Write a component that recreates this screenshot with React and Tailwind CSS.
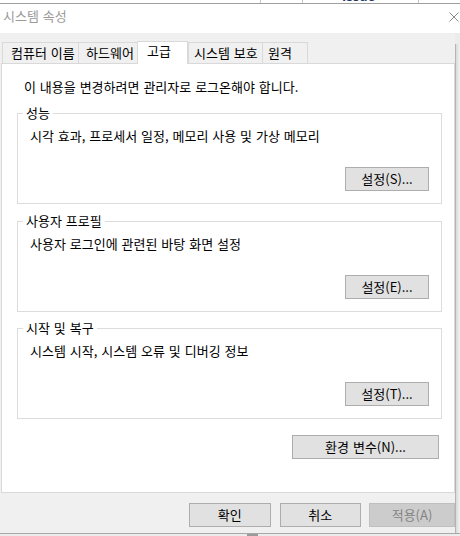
const tabs = [
  { label: '컴퓨터 이름', w: 'w-[76px] pl-[8px]' },
  { label: '하드웨어', w: 'w-[59px] pl-[7px]' },
  { label: '고급', w: 'w-[51px] pl-[9px]', active: true },
  { label: '시스템 보호', w: 'w-[74px] pl-[5px]' },
  { label: '원격', w: 'w-[46px] pl-[5px]', last: true },
]

const groups = [
  { title: '성능', desc: '시각 효과, 프로세서 일정, 메모리 사용 및 가상 메모리', btn: '설정(S)...', mt: 'mt-[10px]' },
  { title: '사용자 프로필', desc: '사용자 로그인에 관련된 바탕 화면 설정', btn: '설정(E)...', mt: 'mt-[9px]' },
  { title: '시작 및 복구', desc: '시스템 시작, 시스템 오류 및 디버깅 정보', btn: '설정(T)...', mt: 'mt-[8px]' },
]

function Button({ children, className = '', disabled }) {
  return (
    <div
      className={`h-[24px] flex items-center justify-center border text-[13px] leading-[16px] ${
        disabled ? 'bg-[#cccccc] border-[#bfbfbf] text-[#838383]' : 'bg-[#e1e1e1] border-[#adadad] text-black'
      } ${className}`}
    >
      {children}
    </div>
  )
}

function GroupBox({ title, desc, btn, mt }) {
  return (
    <fieldset className={`${mt} ml-[15px] w-[425px] border border-[#dcdcdc]`}>
      <legend className="ml-[5px] px-[3px] text-[13px] leading-[16px] text-black">{title}</legend>
      <div className="mt-[7px] pl-[12px] text-[13px] leading-[16px] text-black">{desc}</div>
      <div className="mt-[23px] pb-[12px] flex justify-end pr-[12px]">
        <Button className="w-[84px]">{btn}</Button>
      </div>
    </fieldset>
  )
}

export default function App() {
  return (
    <div className="w-[460px] h-[536px] overflow-hidden flex flex-col bg-[#f0f0f0] font-['Noto_Sans_CJK_KR',sans-serif] [word-spacing:1px]">
      {/* window behind */}
      <div className="h-[3px] relative overflow-hidden bg-white">
        <div className="absolute left-[260px] top-0 h-full w-px bg-[#c8c8c8]" />
        <div className="absolute left-[302px] top-0 h-full w-px bg-[#c8c8c8]" />
        <div className="absolute left-[418px] top-0 h-full w-px bg-[#c8c8c8]" />
        <div className="absolute left-[342px] top-[-11px] text-[13px] leading-[14px] font-bold text-[#1f3864]">Issue</div>
      </div>

      {/* title bar */}
      <div className="h-[30px] border-t border-[#a0a0a0] bg-white flex items-start justify-between pl-[3px] pr-[1px] pt-[4px]">
        <span className="text-[13px] leading-[16px] text-[#9a9a9a]">시스템 속성</span>
        <svg width="10" height="10" viewBox="0 0 10 10" className="mt-[4px]">
          <path d="M0.5 0.5 L9.5 9.5 M9.5 0.5 L0.5 9.5" stroke="#8a8a8a" strokeWidth="1" />
        </svg>
      </div>

      <div className="flex h-[500px]">
        <div className="w-[455px] flex flex-col pt-[8px] pl-[1px]">
          {/* tabs */}
          <div className="h-[22px] flex items-end ml-[1px]">
            {tabs.map((t) =>
              t.active ? (
                <div
                  key={t.label}
                  className={`${t.w} h-[23px] -mb-px relative z-10 bg-white border border-b-0 border-[#d9d9d9] text-[13px] leading-[16px] pt-[1px] text-black`}
                >
                  {t.label}
                </div>
              ) : (
                <div
                  key={t.label}
                  className={`${t.w} h-[21px] bg-[#f0f0f0] border-t border-l ${t.last ? 'border-r' : ''} border-[#d9d9d9] text-[13px] leading-[16px] pt-[2px] text-black`}
                >
                  {t.label}
                </div>
              )
            )}
          </div>

          {/* panel */}
          <div className="h-[430px] bg-white border border-[#d9d9d9] flex flex-col">
            <div className="pt-[15px] pl-[22px] text-[13px] leading-[16px] text-black">
              이 내용을 변경하려면 관리자로 로그온해야 합니다.
            </div>
            {groups.map((g) => (
              <GroupBox key={g.title} {...g} />
            ))}
            <div className="mt-[16px] ml-[290px]">
              <Button className="w-[147px]">환경 변수(N)...</Button>
            </div>
          </div>

          {/* dialog buttons */}
          <div className="flex pt-[10px] pl-[188px]">
            <Button className="w-[86px]">확인</Button>
            <Button className="w-[86px] ml-[9px]">취소</Button>
            <Button disabled className="w-[86px] ml-[8px] shrink-0">적용(A)</Button>
          </div>
        </div>
        {/* right edge of window / shadow */}
        <div className="w-[5px] flex flex-col">
          <div className="h-[11px] bg-[#ececec]" />
          <div className="flex-1 border-l border-[#b4b4b4] bg-gradient-to-r from-[#dadada] to-[#f2f2f2]" />
        </div>
      </div>

      <div className="h-px bg-[#a8a8a8]" />
      <div className="flex-1 relative bg-[#ececec]">
        <div className="absolute left-[247px] top-0 h-full w-[11px] bg-[#9a9a9a]" />
      </div>
    </div>
  )
}
